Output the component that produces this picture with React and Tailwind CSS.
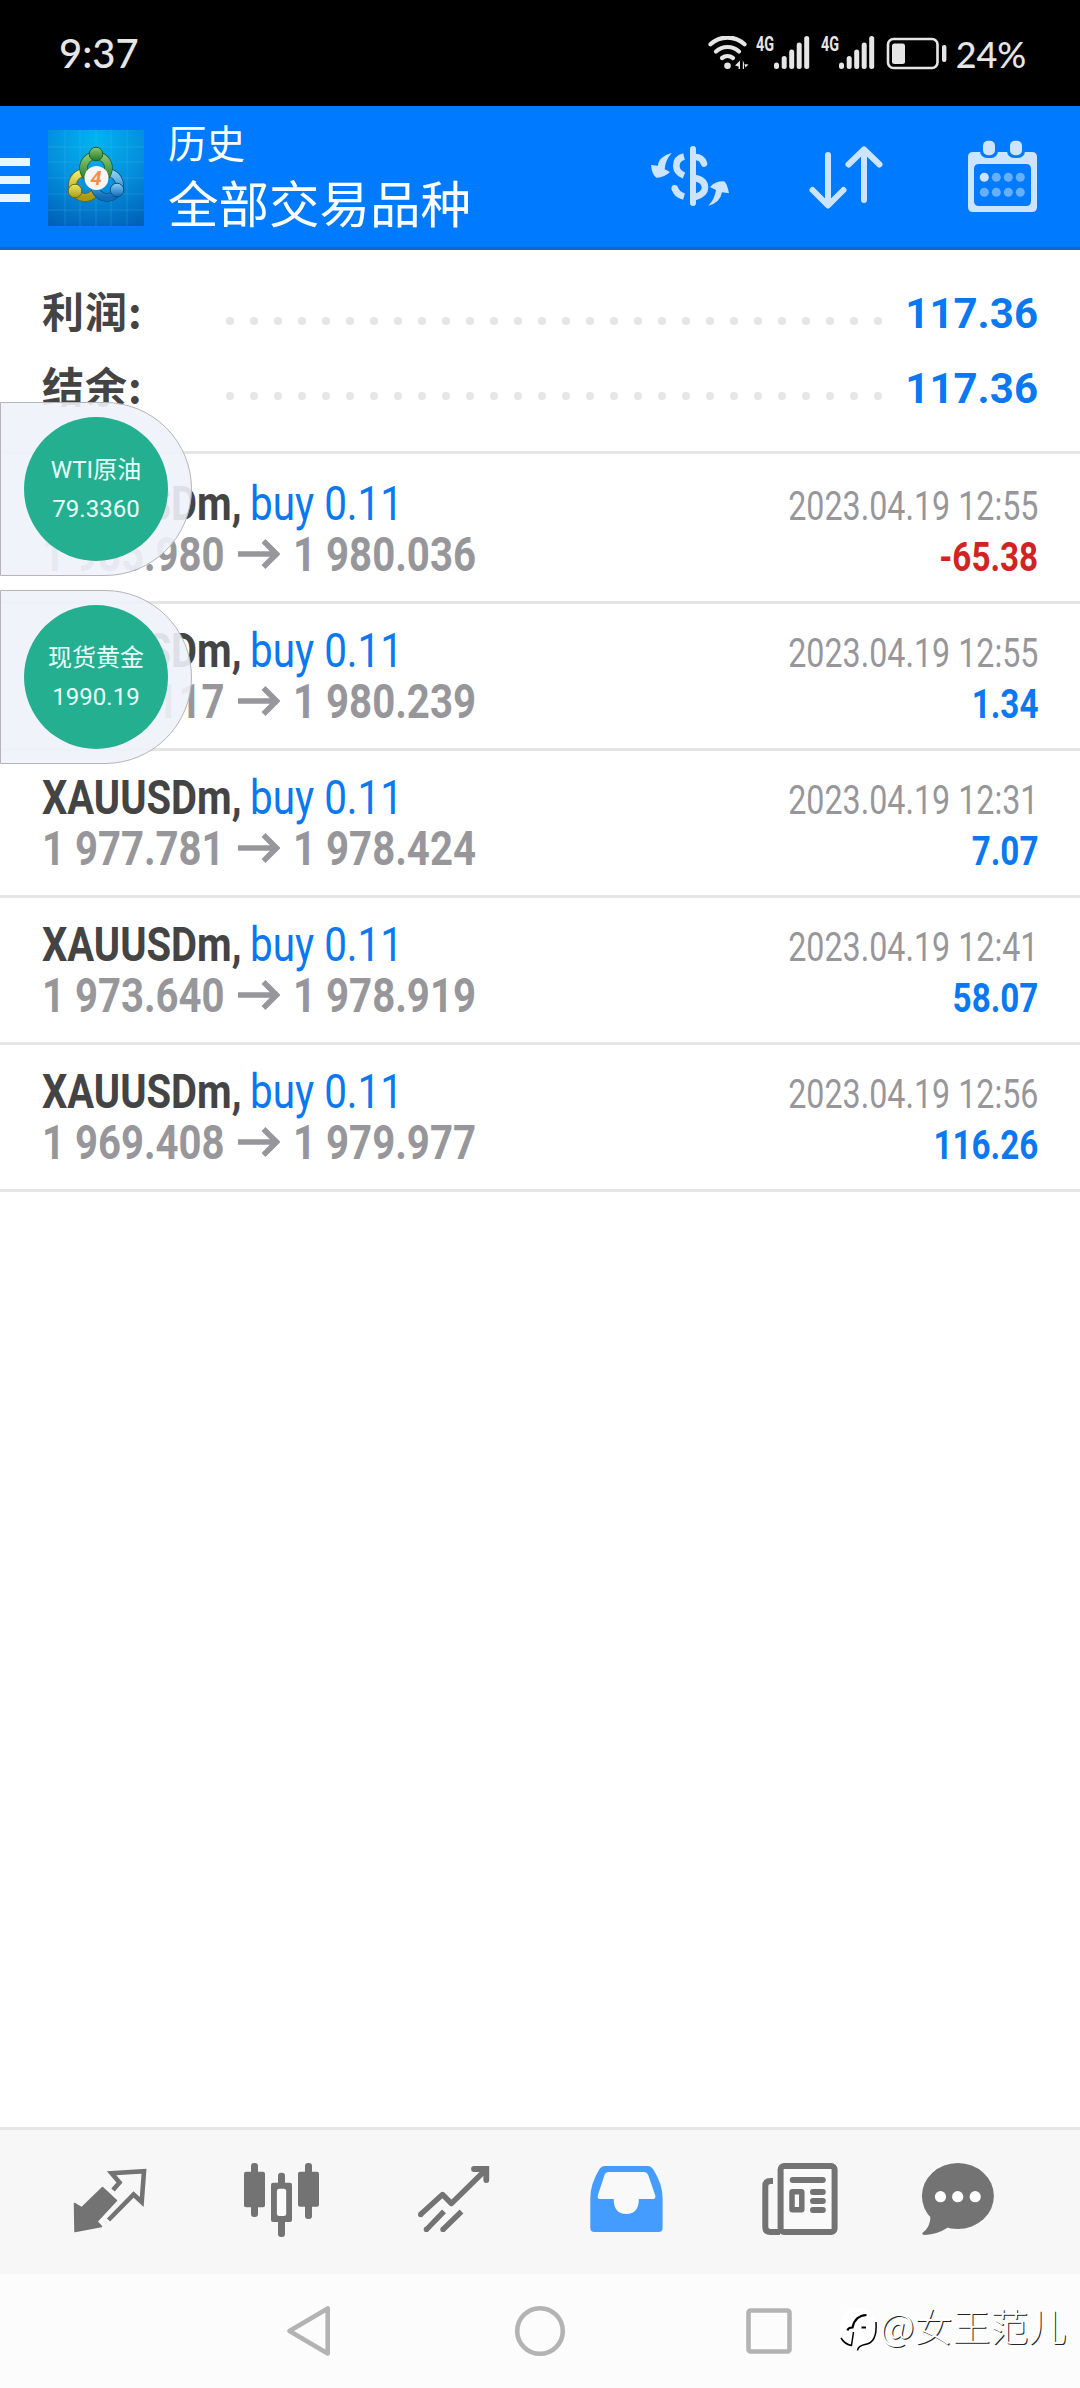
const deals = [
  { symbol: 'XAUUSDm', side: 'buy 0.11', open: '1 985.980', close: '1 980.036', time: '2023.04.19 12:55', profit: '-65.38' },
  { symbol: 'XAUUSDm', side: 'buy 0.11', open: '1 980.117', close: '1 980.239', time: '2023.04.19 12:55', profit: '1.34' },
  { symbol: 'XAUUSDm', side: 'buy 0.11', open: '1 977.781', close: '1 978.424', time: '2023.04.19 12:31', profit: '7.07' },
  { symbol: 'XAUUSDm', side: 'buy 0.11', open: '1 973.640', close: '1 978.919', time: '2023.04.19 12:41', profit: '58.07' },
  { symbol: 'XAUUSDm', side: 'buy 0.11', open: '1 969.408', close: '1 979.977', time: '2023.04.19 12:56', profit: '116.26' },
];

const summary = [
  { label: '利润:', value: '117.36' },
  { label: '结余:', value: '117.36' },
];

function Signal() {
  return (
    <div className="flex w-[54px] h-[34px] mr-[11px]">
      <span className="w-[18px] text-[20px] leading-[16px] font-bold origin-left scale-x-[0.72] font-['Roboto',sans-serif]">4G</span>
      <svg width="36" height="34" viewBox="0 0 36 34" fill="#e6e6e6">
        <rect x="0" y="26.5" width="5" height="6.5" rx="2.5" />
        <rect x="7.7" y="20" width="5" height="13" rx="2.5" />
        <rect x="15.2" y="13.5" width="5" height="19.5" rx="2.5" />
        <rect x="22.7" y="6.5" width="5" height="26.5" rx="2.5" />
        <rect x="30.2" y="0" width="5" height="33" rx="2.5" />
      </svg>
    </div>
  );
}

function StatusBar() {
  return (
    <div className="h-[106px] bg-black text-[#e6e6e6] flex items-start pl-[59px] font-['Lato','Roboto',sans-serif]">
      <span className="w-[649px] pt-[28px] text-[40px] leading-[50px] font-medium">9:37</span>
      <div className="flex pt-[36px]">
        <svg width="48" height="34" viewBox="0 0 48 34" fill="none" stroke="#e6e6e6" strokeWidth="4.2" strokeLinecap="round">
          <path d="M2.5 8.2 A25 25 0 0 1 36.5 8.2" />
          <path d="M8 15.5 A17 17 0 0 1 31 15.5" />
          <path d="M14 22 A9 9 0 0 1 25 22" />
          <circle cx="19.5" cy="29.7" r="3.3" fill="#e6e6e6" stroke="none" />
          <path d="M32 24.5V33H30.6V30.5L27 29.5Z M34.8 24V33H36V28L40.5 28.5L37.5 31.5" fill="#e6e6e6" stroke="none" />
        </svg>
        <Signal />
        <Signal />
        <svg width="62" height="34" viewBox="0 0 62 34" className="-ml-px mt-px">
          <rect x="3" y="2" width="49.5" height="29" rx="5.5" fill="none" stroke="#e6e6e6" strokeWidth="2.6" />
          <rect x="7" y="6.5" width="13" height="20.5" rx="2.5" fill="#e6e6e6" />
          <rect x="57" y="8" width="4.4" height="17" rx="2" fill="#e6e6e6" />
        </svg>
      </div>
      <span className="pt-[29px] pl-[9px] text-[37px] leading-[50px] font-medium origin-left scale-x-[0.97]">24%</span>
    </div>
  );
}

function AppLogo() {
  return (
    <svg width="96" height="96" viewBox="0 0 96 96">
      <defs>
        <radialGradient id="sky" cx="0.5" cy="0.1" r="1">
          <stop offset="0" stopColor="#00b4f0" />
          <stop offset="0.5" stopColor="#0490dc" />
          <stop offset="1" stopColor="#0060b8" />
        </radialGradient>
        <linearGradient id="green" x1="0" y1="0" x2="0" y2="1">
          <stop offset="0" stopColor="#8cc872" />
          <stop offset="1" stopColor="#1f7a2c" />
        </linearGradient>
        <linearGradient id="yellow" x1="0" y1="0" x2="0" y2="1">
          <stop offset="0" stopColor="#efe768" />
          <stop offset="1" stopColor="#a89a16" />
        </linearGradient>
        <linearGradient id="blue" x1="0" y1="0" x2="0" y2="1">
          <stop offset="0" stopColor="#8ad0f5" />
          <stop offset="1" stopColor="#0f6cb8" />
        </linearGradient>
      </defs>
      <rect width="96" height="96" fill="url(#sky)" />
      <path d="M17 0V96M32 0V96M48 0V96M63 0V96M79 0V96M0 17H96M0 32H96M0 48H96M0 64H96M0 80H96" stroke="#5fc8f5" strokeOpacity="0.22" strokeWidth="1" />
      <circle cx="37" cy="55" r="12.5" fill="none" stroke="#6d6712" strokeWidth="8.5" />
      <circle cx="37" cy="55" r="12.5" fill="none" stroke="url(#yellow)" strokeWidth="7" />
      <circle cx="59" cy="55" r="12.5" fill="none" stroke="#0a4d86" strokeWidth="8.5" />
      <circle cx="59" cy="55" r="12.5" fill="none" stroke="url(#blue)" strokeWidth="7" />
      <circle cx="48" cy="38" r="12.5" fill="none" stroke="#1c5e26" strokeWidth="8.5" />
      <circle cx="48" cy="38" r="12.5" fill="none" stroke="url(#green)" strokeWidth="7" />
      <circle cx="48" cy="24" r="6.8" fill="url(#green)" stroke="#1c5e26" strokeWidth="1" />
      <circle cx="27" cy="61" r="6.8" fill="url(#yellow)" stroke="#6d6712" strokeWidth="1" />
      <circle cx="69" cy="60" r="6.8" fill="url(#blue)" stroke="#0a4d86" strokeWidth="1" />
      <circle cx="48.5" cy="48" r="12" fill="#f6f4f4" />
      <text x="48" y="55" textAnchor="middle" fontSize="20" fontStyle="italic" fontWeight="bold" fontFamily="Roboto, sans-serif" fill="#f0904a">4</text>
    </svg>
  );
}

function Header() {
  return (
    <header className="h-[144px] bg-[#007aff] border-b-3 border-[#0f6ad0] flex text-white">
      <div className="w-[30px] pt-[52px] flex flex-col gap-[10px]">
        <span className="h-2 bg-[#eaf6ff]" />
        <span className="h-2 bg-[#eaf6ff]" />
        <span className="h-2 bg-[#eaf6ff]" />
      </div>
      <div className="pl-[18px] pt-6">
        <AppLogo />
      </div>
      <div className="w-[482px] pl-6 pt-[7px] font-['Noto_Sans_CJK_SC',sans-serif]">
        <div className="text-[38.5px] leading-[56px]">历史</div>
        <div className="text-[50.5px] leading-[64px]">全部交易品种</div>
      </div>
      <div className="flex pt-8 pl-6">
        <svg width="82" height="72" viewBox="0 -2 82 72" fill="none" stroke="#cce4ff" strokeWidth="6.6">
          <path d="M21.7 13Q8 17 8 25.7L1 25Q2 35 6.5 37.7Q15 37.3 20 32L14.7 29.3Q15.3 20 21.7 13Z" fill="#cce4ff" stroke="none" />
          <path d="M58.3 65.7Q70 63 72 52.3L79 53.3Q77 43 74 41.3Q65 41 60 47L66 50Q64.7 59.3 58.3 65.7Z" fill="#cce4ff" stroke="none" />
          <path d="M43 9V63" strokeWidth="6" strokeLinecap="round" />
          <path d="M34 16.5Q26.3 18.5 26.3 25.7Q26.3 32.5 34 35.5" />
          <path d="M45 17Q52 17 54 23.5" strokeLinecap="round" />
          <path d="M24.7 48Q26.5 54.5 34 56.6" />
          <circle cx="24.7" cy="48.2" r="3.2" fill="#cce4ff" stroke="none" />
          <path d="M45 38Q55 40 55 47.7Q55 54 45 57" />
        </svg>
        <svg width="78" height="72" viewBox="0 0 78 72" className="ml-[76px] mt-[6px]" fill="none" stroke="#cce4ff" strokeWidth="6" strokeLinecap="round" strokeLinejoin="round">
          <path d="M20 11V61M4.5 46L20 61.5L35.5 46" />
          <path d="M56 56V6M40.5 20.5L56 5.5L71.5 20.5" />
        </svg>
        <svg width="74" height="78" viewBox="0 0 74 78" className="ml-[80px]">
          <path fillRule="evenodd" fill="#cce4ff" d="M7 14H66Q71 14 71 19V69Q71 74 66 74H7Q2 74 2 69V19Q2 14 7 14ZM13 26Q8 26 8 31V63Q8 68 13 68H60Q65 68 65 63V31Q65 26 60 26Z" />
          <rect x="14" y="0" width="18" height="20" rx="7" fill="#007aff" />
          <rect x="41" y="0" width="18" height="20" rx="7" fill="#007aff" />
          <rect x="17" y="2.7" width="12" height="14.5" rx="5" fill="#cce4ff" />
          <rect x="44" y="2.7" width="12" height="14.5" rx="5" fill="#cce4ff" />
          {[39.3, 54.3].map((y) =>
            [18.3, 30.3, 42.3, 54.3].map((x) => (
              <circle key={`${x}-${y}`} cx={x} cy={y} r="4.5" fill={x < 20 && y < 40 ? '#cce4ff' : '#66afff'} />
            ))
          )}
        </svg>
      </div>
    </header>
  );
}

function Summary() {
  return (
    <div className="h-[204px] border-b-3 border-[#e5e5e5] pt-[26px] pl-[42px] pr-[42px]">
      {summary.map((row) => (
        <div key={row.label} className="h-[75px] flex items-baseline leading-[67px] text-[42px] font-bold">
          <span className="w-[184px] tracking-[1px] text-[#444] font-['Noto_Sans_CJK_SC',sans-serif]">{row.label}</span>
          <span className="flex gap-4 self-start pt-[41px]">
            {Array.from({ length: 28 }, (_, i) => (
              <span key={i} className="w-2 h-2 rounded-full bg-[#e5e5e5]" />
            ))}
          </span>
          <span className="ml-auto text-[#0a78f0] font-['Roboto',sans-serif]">{row.value}</span>
        </div>
      ))}
    </div>
  );
}

function Deal({ deal }) {
  const loss = deal.profit.startsWith('-');
  return (
    <div className="h-[147px] border-b-3 border-[#e5e5e5] flex justify-between pl-[42px] pr-[42px] leading-[51px] whitespace-nowrap font-['Roboto',sans-serif]">
      <div className="pt-[21px] text-[49px]">
        <div className="flex h-[51px]">
          <span className="w-[208px]">
            <span className="inline-block origin-left scale-x-[0.815] font-bold text-[#444]">{deal.symbol},</span>
          </span>
          <span className="inline-block origin-left scale-x-[0.825] text-[#0a78f0]">{deal.side}</span>
        </div>
        <div className="flex h-[51px] font-bold text-[#97979b]">
          <span className="w-[196px]">
            <span className="inline-block origin-left scale-x-[0.818]">{deal.open}</span>
          </span>
          <svg width="42" height="51" viewBox="0 0 42 51" fill="none" stroke="#97979b" strokeWidth="5.5">
            <path d="M0 25H39M25.5 12L38.5 25L25.5 38" />
          </svg>
          <span className="inline-block ml-[13px] origin-left scale-x-[0.82]">{deal.close}</span>
        </div>
      </div>
      <div className="pt-6 text-[40px] flex flex-col items-end">
        <span className="origin-right scale-x-[0.806] text-[#97979b]">{deal.time}</span>
        <span className={`origin-right scale-x-[0.83] font-bold ${loss ? 'text-[#d02424]' : 'text-[#0a78f0]'}`}>{deal.profit}</span>
      </div>
    </div>
  );
}

function Quote({ name, price }) {
  return (
    <div className="w-[192px] h-[174px] rounded-r-full border border-[#b4b4ba] bg-[#eef2f8]/90 flex items-center pl-[23px]">
      <div className="w-36 h-36 rounded-full bg-[#24af91] text-[#e8fffa] text-center text-[24px] leading-[39px] pt-[34px] font-['Roboto','Noto_Sans_CJK_SC',sans-serif]">
        <div>{name}</div>
        <div>{price}</div>
      </div>
    </div>
  );
}

function TabBar() {
  return (
    <nav className="h-[147px] border-t-3 border-[#e5e5e5] bg-[#f7f7f7] pt-[30px] pl-[70px] flex gap-[92px]">
      <svg width="80" height="80" viewBox="0 0 80 80">
        <path d="M4.5 43.5L11.6 47.7L32.5 27.5L46.5 40.5L27 61.5L31.5 66.5L5 71.5Z" fill="#737373" stroke="#737373" strokeWidth="1.5" strokeLinejoin="round" />
        <path d="M43 30L49.5 22.5L41.6 13.3L74 11.3L71.7 42L63.6 34.5L38.5 60" fill="none" stroke="#737373" strokeWidth="4.6" />
      </svg>
      <svg width="80" height="80" viewBox="0 0 80 80" fill="#737373">
        <rect x="9" y="3" width="7" height="54" rx="3" />
        <rect x="2" y="11.7" width="21" height="35.5" rx="2" />
        <rect x="36" y="12.7" width="7" height="64.3" rx="3" />
        <rect x="29" y="22.7" width="21" height="39.3" rx="2" />
        <rect x="34.9" y="28.7" width="9.3" height="27.3" rx="2.5" fill="#fafafa" />
        <rect x="63" y="3" width="7" height="56" rx="3" />
        <rect x="56" y="11.7" width="21" height="35" rx="2" />
      </svg>
      <svg width="80" height="80" viewBox="0 0 80 80" fill="none" stroke="#737373" strokeWidth="5.4">
        <path d="M6.5 54.5L28.5 34.5L37.4 43.5L71.5 10" strokeLinejoin="round" />
        <path d="M60 9H72.3V20" strokeLinecap="round" strokeWidth="5.8" />
        <path d="M12.5 69.5L30 51.3M29 69.5L47.5 51.5" />
        <g fill="#737373" stroke="none">
          <circle cx="6.7" cy="54.5" r="2.7" />
          <circle cx="12.4" cy="69.4" r="2.7" />
          <circle cx="29" cy="69.4" r="2.7" />
        </g>
      </svg>
      <svg width="80" height="80" viewBox="0 0 80 80">
        <path d="M19 6H62Q65 6 67 9Q76.6 24 76.6 38V68Q76.6 72 72.6 72H8.3Q4.3 72 4.3 68V38Q4.3 24 13.5 9Q15.5 6 19 6Z" fill="#449cff" />
        <path d="M23 12H58Q61 12 62 14.5L69.3 35.5Q70 39 67 39H52.8Q52.8 54 40.3 54Q27.7 54 27.7 39H14Q11 39 11.8 35.5L18.5 15Q19.5 12 23 12Z" fill="#f9f9f9" />
      </svg>
      <svg width="80" height="80" viewBox="0 0 80 80" className="ml-0.5" fill="none" stroke="#737373" strokeWidth="6">
        <rect x="20.6" y="6" width="54" height="66" rx="3.5" fill="#fafafa" />
        <path d="M13 21H10.5Q5.3 21 5.3 26V67Q5.3 72 10.5 72H20" />
        <path d="M32.7 20H62.8M53 32H62.8M53 41H62.8M53 50H62.8" strokeLinecap="round" />
        <rect x="32" y="31.8" width="9.8" height="18" rx="0.5" strokeWidth="5.5" />
      </svg>
      <svg width="80" height="80" viewBox="0 0 80 80" className="-ml-3.5" fill="#737373">
        <ellipse cx="39.9" cy="36" rx="36" ry="33" />
        <path d="M12.5 56Q12.5 67 4.6 72.8Q3.5 75 7 75Q19 74.5 30 67.5Z" />
        <g fill="#fff">
          <circle cx="22.5" cy="36.7" r="5.6" />
          <circle cx="39.7" cy="36.7" r="5.6" />
          <circle cx="57.2" cy="36.7" r="5.6" />
        </g>
      </svg>
    </nav>
  );
}

function SystemNav() {
  return (
    <div className="relative h-[114px] bg-[#fcfcfc] flex items-start pt-[30px] pl-[285px]">
      <svg width="48" height="54" viewBox="0 0 48 54" fill="none" stroke="#b3b3b3" strokeWidth="4.6" strokeLinejoin="round">
        <path d="M42.7 4.5V49.5L4.5 27Z" />
      </svg>
      <svg width="54" height="54" viewBox="0 0 54 54" className="ml-[180px]" fill="none" stroke="#b3b3b3" strokeWidth="4.6">
        <circle cx="27" cy="27" r="22.8" />
      </svg>
      <svg width="50" height="54" viewBox="0 0 50 54" className="ml-[177px]" fill="none" stroke="#b3b3b3" strokeWidth="4.6">
        <rect x="4.5" y="6.5" width="41" height="41" rx="2" />
      </svg>
      {/* author tag */}
      <div className="absolute left-[838px] top-[23px] flex items-start">
        <svg width="42" height="52" viewBox="0 0 42 52" className="mt-1">
          <path d="M19 7Q38 7 38 27Q38 44 20 50L17 45Q2 42 2 27Q2 7 19 7Z" fill="#fff" />
          <path d="M9.500 29.500Q10 26.500 14.500 26.500Q17 14.500 28.500 14M23.500 26.500H28" fill="none" stroke="#000" strokeWidth="2.200" />
          <path d="M38 21Q39.500 42 27 43.500Q20 45 19.500 49.500M15.500 31L13.500 44.500Q7 43.500 3 37" fill="none" stroke="#000" strokeWidth="1.500" />
        </svg>
        <span className="text-[38px] leading-[56px] text-white whitespace-nowrap [text-shadow:1px_1px_0_#222] font-['Noto_Sans_CJK_SC',sans-serif] font-light">@女王范儿</span>
      </div>
    </div>
  );
}

export default function App() {
  return (
    <div className="relative w-[1080px] h-[2388px] bg-white flex flex-col overflow-hidden">
      <StatusBar />
      <Header />
      <Summary />
      <main className="flex-1 pt-[3px]">
        {deals.map((deal) => (
          <Deal key={deal.open} deal={deal} />
        ))}
      </main>
      <TabBar />
      <SystemNav />

      {/* floating quotes */}
      <div className="absolute left-0 top-[402px] flex flex-col gap-[14px]">
        <Quote name="WTI原油" price="79.3360" />
        <Quote name="现货黄金" price="1990.19" />
      </div>
    </div>
  );
}
